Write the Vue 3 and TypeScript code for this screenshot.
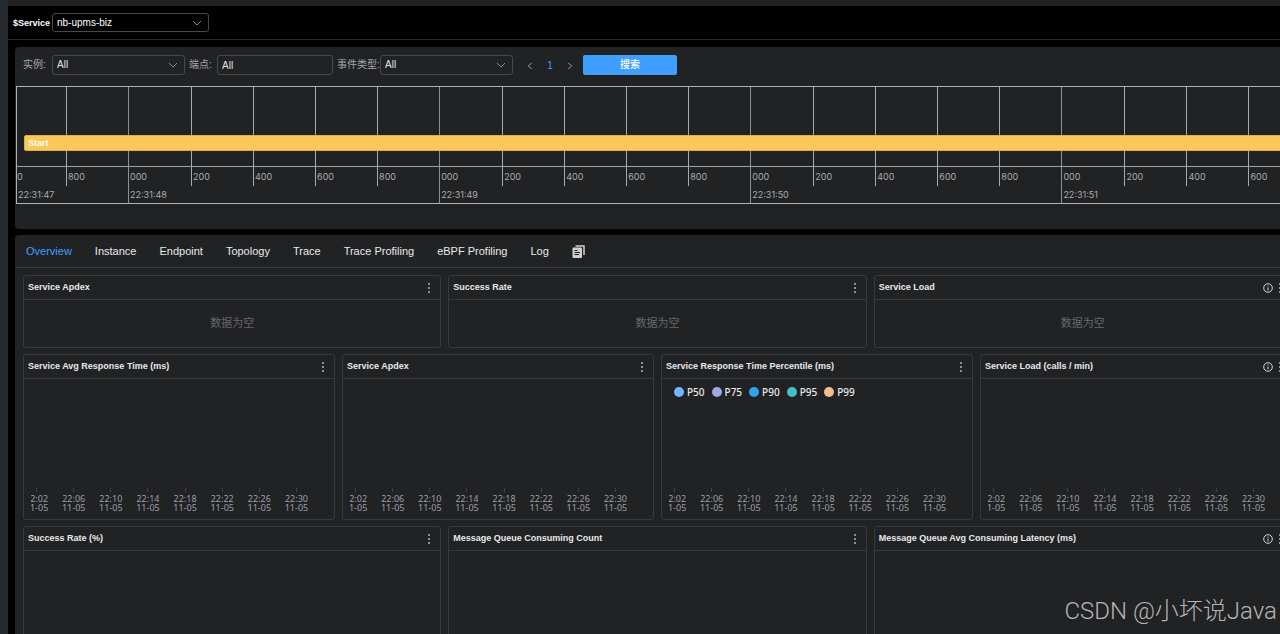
<script setup lang="ts">
import { ref } from 'vue'

interface Card {
  title: string
  kind: 'empty' | 'chart'
  info?: boolean
  legend?: boolean
}

const service = ref('nb-upms-biz')
const instance = ref('All')
const endpoint = ref('All')
const eventType = ref('All')
const activeTab = ref('Overview')

const tabs: string[] = ['Overview', 'Instance', 'Endpoint', 'Topology', 'Trace', 'Trace Profiling', 'eBPF Profiling', 'Log']

const seconds = [
  { label: '22:31:48', ticks: ['000', '200', '400', '600', '800'] },
  { label: '22:31:49', ticks: ['000', '200', '400', '600', '800'] },
  { label: '22:31:50', ticks: ['000', '200', '400', '600', '800'] },
  { label: '22:31:51', ticks: ['000', '200', '400', '600'] },
]

const rows: Card[][] = [
  [
    { title: 'Service Apdex', kind: 'empty' },
    { title: 'Success Rate', kind: 'empty' },
    { title: 'Service Load', kind: 'empty', info: true },
  ],
  [
    { title: 'Service Avg Response Time (ms)', kind: 'chart' },
    { title: 'Service Apdex', kind: 'chart' },
    { title: 'Service Response Time Percentile (ms)', kind: 'chart', legend: true },
    { title: 'Service Load (calls / min)', kind: 'chart', info: true },
  ],
  [
    { title: 'Success Rate (%)', kind: 'chart' },
    { title: 'Message Queue Consuming Count', kind: 'chart' },
    { title: 'Message Queue Avg Consuming Latency (ms)', kind: 'chart', info: true },
  ],
]

const legend = [
  { name: 'P50', color: '#72b6ff' },
  { name: 'P75', color: '#a0a7e6' },
  { name: 'P90', color: '#30a4eb' },
  { name: 'P95', color: '#45bfc0' },
  { name: 'P99', color: '#f0be91' },
]

const times: string[] = ['22:02', '22:06', '22:10', '22:14', '22:18', '22:22', '22:26', '22:30']
</script>

<template>
  <div class="app">
    <aside class="rail"></aside>
    <div class="main">
      <div class="strip"></div>
      <header class="service-bar">
        <label for="service">$Service</label>
        <span class="select service-select">
          <select id="service" v-model="service">
            <option>nb-upms-biz</option>
          </select>
          <svg class="caret" viewBox="0 0 10 6"><path d="M1 1l4 4 4-4" /></svg>
        </span>
      </header>

      <div class="content">
        <section class="panel events">
          <form class="filters" @submit.prevent>
            <label class="name" for="instance">实例:</label>
            <span class="select">
              <select id="instance" v-model="instance">
                <option>All</option>
              </select>
              <svg class="caret" viewBox="0 0 10 6"><path d="M1 1l4 4 4-4" /></svg>
            </span>
            <label class="name" for="endpoint">端点:</label>
            <input id="endpoint" v-model="endpoint" class="text" type="text" />
            <label class="name" for="event-type">事件类型:</label>
            <span class="select">
              <select id="event-type" v-model="eventType">
                <option>All</option>
              </select>
              <svg class="caret" viewBox="0 0 10 6"><path d="M1 1l4 4 4-4" /></svg>
            </span>
            <nav class="pager">
              <button type="button" aria-label="Previous"><svg viewBox="0 0 6 8"><path d="M5 1L1 4l4 3" /></svg></button>
              <button type="button" class="current">1</button>
              <button type="button" aria-label="Next"><svg viewBox="0 0 6 8"><path d="M1 1l4 3-4 3" /></svg></button>
            </nav>
            <button type="submit" class="search">搜索</button>
          </form>

          <div class="timeline">
            <div class="second lead">
              <div class="ticks">
                <span class="tick cut">0</span>
                <span class="tick">800</span>
              </div>
              <span class="clock">22:31:47</span>
            </div>
            <div v-for="s in seconds" :key="s.label" class="second">
              <div class="ticks">
                <span v-for="t in s.ticks" :key="t" class="tick">{{ t }}</span>
              </div>
              <span class="clock">{{ s.label }}</span>
            </div>
            <div class="axis"></div>
            <div class="event">Start</div>
          </div>
        </section>

        <section class="panel board">
          <nav class="tabs">
            <button
              v-for="t in tabs"
              :key="t"
              type="button"
              :class="{ active: t === activeTab }"
              @click="activeTab = t"
            >{{ t }}</button>
            <button type="button" class="copy" aria-label="Copy">
              <svg viewBox="0 0 13 13">
                <path class="back" d="M3.5 1H12v9" />
                <path class="sheet" d="M1.500 2.500h7.500a1 1 0 0 1 1 1V12a1 1 0 0 1-1 1H1.500a1 1 0 0 1-1-1V3.500a1 1 0 0 1 1-1z" />
                <path class="lines" d="M2.500 5.500h3M2.500 7.500h5.500M2.500 9.500h4.500" />
              </svg>
            </button>
          </nav>

          <div class="rows">
            <div v-for="(row, i) in rows" :key="i" class="row">
              <article v-for="c in row" :key="c.title" class="card">
                <header>
                  <h2>{{ c.title }}</h2>
                  <svg v-if="c.info" class="info" viewBox="0 0 10 10">
                    <circle cx="5" cy="5" r="4.300" />
                    <path d="M5 4.500v3M5 2.500v1" />
                  </svg>
                  <button type="button" class="more" aria-label="More">
                    <svg viewBox="0 0 4 12">
                      <circle cx="2" cy="2" r="1" /><circle cx="2" cy="6" r="1" /><circle cx="2" cy="10" r="1" />
                    </svg>
                  </button>
                </header>
                <p v-if="c.kind === 'empty'" class="empty">数据为空</p>
                <div v-else class="chart">
                  <ul v-if="c.legend" class="legend">
                    <li v-for="l in legend" :key="l.name"><i :style="{ background: l.color }"></i>{{ l.name }}</li>
                  </ul>
                  <ol v-if="i === 1" class="times">
                    <li v-for="t in times" :key="t"><span>{{ t }}</span><span>11-05</span></li>
                  </ol>
                </div>
              </article>
            </div>
          </div>
        </section>
      </div>
    </div>
    <div class="watermark">CSDN @小坏说Java</div>
  </div>
</template>

<style>
body {
  background: #000;
}
</style>

<style scoped>
* {
  box-sizing: border-box;
}
.app {
  position: relative;
  display: flex;
  height: 100vh;
  overflow: hidden;
  background: #000;
  color: #e8e9eb;
  font: 10px/12px "Liberation Sans", "Noto Sans CJK SC", sans-serif;
}
button,
select,
input {
  margin: 0;
  padding: 0;
  border: 0;
  background: none;
  color: inherit;
  font: inherit;
}
.rail {
  flex: none;
  width: 8px;
  background: #252a2f;
}
.main {
  flex: 1;
  min-width: 0;
}
.strip {
  height: 6px;
  background: #212224;
}
.service-bar {
  display: flex;
  align-items: center;
  gap: 2px;
  height: 34px;
  padding-left: 5px;
  border-bottom: 1px solid #27282a;
  color: #fff;
}
.service-bar label {
  width: 37px;
  white-space: nowrap;
  font-size: 9px;
  font-weight: 700;
}
.select {
  display: flex;
  align-items: center;
  width: 133px;
  height: 20px;
  padding-right: 6px;
  border: 1px solid #47484c;
  border-radius: 3px;
}
.service-select {
  width: 157px;
  height: 19px;
}
.select select {
  flex: 1;
  height: 100%;
  padding-left: 4px;
  appearance: none;
  outline: none;
}
.caret {
  width: 10px;
  height: 6px;
  margin-left: -10px;
  pointer-events: none;
}
.caret path,
.pager path {
  fill: none;
  stroke: #86888c;
  stroke-width: 1;
}
.content {
  margin: 7px -20px 0 7px;
}
.panel {
  border-radius: 4px;
  background: #212224;
}
.events {
  height: 182px;
  padding-top: 8px;
}
.filters {
  display: flex;
  align-items: center;
  height: 20px;
  padding-left: 8px;
  color: #e0e2e6;
}
.name {
  margin-right: 4px;
  color: #a3a6ad;
  white-space: nowrap;
}
.filters .name:first-child {
  width: 25px;
}
.select + .name,
.text + .name {
  margin-left: 4px;
}
.filters .name:nth-of-type(2) {
  width: 24px;
}
.filters .name:nth-of-type(3) {
  width: 39px;
}
.text {
  width: 116px;
  height: 20px;
  padding: 0 4px;
  border: 1px solid #47484c;
  border-radius: 3px;
  outline: none;
}
.pager {
  display: flex;
  width: 60px;
  margin: 2px 3px 0 7px;
}
.pager button {
  display: flex;
  flex: 1;
  align-items: center;
  justify-content: center;
}
.pager svg {
  width: 6px;
  height: 8px;
}
.pager .current {
  color: #409eff;
}
.search {
  width: 94px;
  height: 20px;
  border-radius: 2px;
  background: #409eff;
  color: #fff;
  font-weight: 500;
}
.timeline {
  position: relative;
  display: flex;
  height: 118px;
  margin: 11px 0 0 1px;
  border: 1px solid #b0b1b3;
  border-width: 1px 0 1px 1px;
  overflow: hidden;
  color: #a9abae;
  font: 9px/12px Inter, sans-serif;
}
.second {
  display: flex;
  flex: 0 0 24.250%;
  flex-direction: column;
  border-left: 1px solid #8f9092;
}
.second.lead {
  flex-basis: 111px;
  border-left: 0;
}
.ticks {
  display: flex;
  height: 99px;
}
.tick {
  flex: 0 0 20%;
  padding: 84px 0 0 1px;
  border-left: 1px solid #a8a9ab;
}
.tick:first-child {
  border-left: 0;
}
.lead .tick {
  flex: 1;
}
.lead .cut {
  flex: none;
  width: 49px;
  padding-left: 0;
}
.clock {
  padding: 3px 0 0 1px;
}
.axis {
  position: absolute;
  inset: 79px 0 auto 0;
  height: 1px;
  background: #a0a1a3;
}
.event {
  position: absolute;
  inset: 48px 0 auto 7px;
  height: 16px;
  padding: 0 3px;
  border: 1px solid #dcb04c;
  border-radius: 2px;
  background: #fac858;
  color: #fff;
  font: 700 9px/14px "Liberation Sans", sans-serif;
}
.board {
  margin-top: 6px;
}
.tabs {
  display: flex;
  align-items: center;
  gap: 23px;
  height: 33px;
  padding-left: 11px;
  border-bottom: 1px solid #38393c;
  font-size: 11px;
  line-height: 14px;
  text-shadow: 0 0 1px currentColor;
}
.tabs .active {
  color: #409eff;
  text-shadow: none;
}
.copy svg {
  display: block;
  width: 13px;
  height: 13px;
}
.copy .back {
  fill: none;
  stroke: #cfcfd0;
  stroke-width: 1.500;
}
.copy .sheet {
  fill: #cfcfd0;
}
.copy .lines {
  stroke: #212224;
  stroke-width: 1;
}
.rows {
  display: grid;
  gap: 6px;
  padding: 7px 8px 10px;
}
.row {
  display: grid;
  grid-auto-flow: column;
  grid-auto-columns: minmax(0, 1fr);
  gap: 7px;
}
.card {
  border: 1px solid #38393c;
  border-radius: 3px;
}
.card header {
  display: flex;
  align-items: center;
  height: 24px;
  padding: 0 9px 1px 4px;
  border-bottom: 1px solid #38393c;
}
.card h2 {
  flex: 1;
  margin: 0;
  font-size: 9px;
  font-weight: 700;
  line-height: 12px;
}
.info {
  width: 10px;
  height: 10px;
  margin: 2px 5px 0 0;
}
.info circle,
.info path {
  fill: none;
  stroke: #d5d6d8;
  stroke-width: 1;
}
.more svg {
  display: block;
  width: 4px;
  height: 12px;
  margin-top: 2px;
  fill: #b5b6b9;
}
.empty {
  margin: 0;
  padding: 16px 0;
  color: #66686b;
  font-size: 11px;
  line-height: 15px;
  text-align: center;
}
.chart {
  display: flex;
  flex-direction: column;
  height: 140px;
  margin-left: 7px;
  padding: 7px 0 7px;
  overflow: hidden;
  font: 9px/12px "Noto Sans", sans-serif;
}
.legend {
  display: flex;
  gap: 7px;
  margin: 0;
  padding-left: 5px;
  list-style: none;
  font-size: 10px;
  font-weight: 500;
}
.legend li {
  display: flex;
  align-items: center;
  gap: 3px;
}
.legend i {
  width: 10px;
  height: 10px;
  border-radius: 50%;
}
.times {
  display: flex;
  margin: auto 0 0 -13px;
  padding: 0;
  list-style: none;
  color: #9c9fa8;
  line-height: 9px;
}
.times li {
  display: flex;
  flex: 0 0 11.750%;
  flex-direction: column;
  align-items: center;
}
.times li::before {
  width: 1px;
  height: 4px;
  margin-bottom: 2px;
  background: #404246;
  content: "";
}
.watermark {
  position: absolute;
  right: 3px;
  bottom: 7px;
  color: #b4b5b6;
  font: 24px/32px Roboto, "Noto Sans CJK SC", sans-serif;
  font-weight: 300;
  pointer-events: none;
}
</style>
